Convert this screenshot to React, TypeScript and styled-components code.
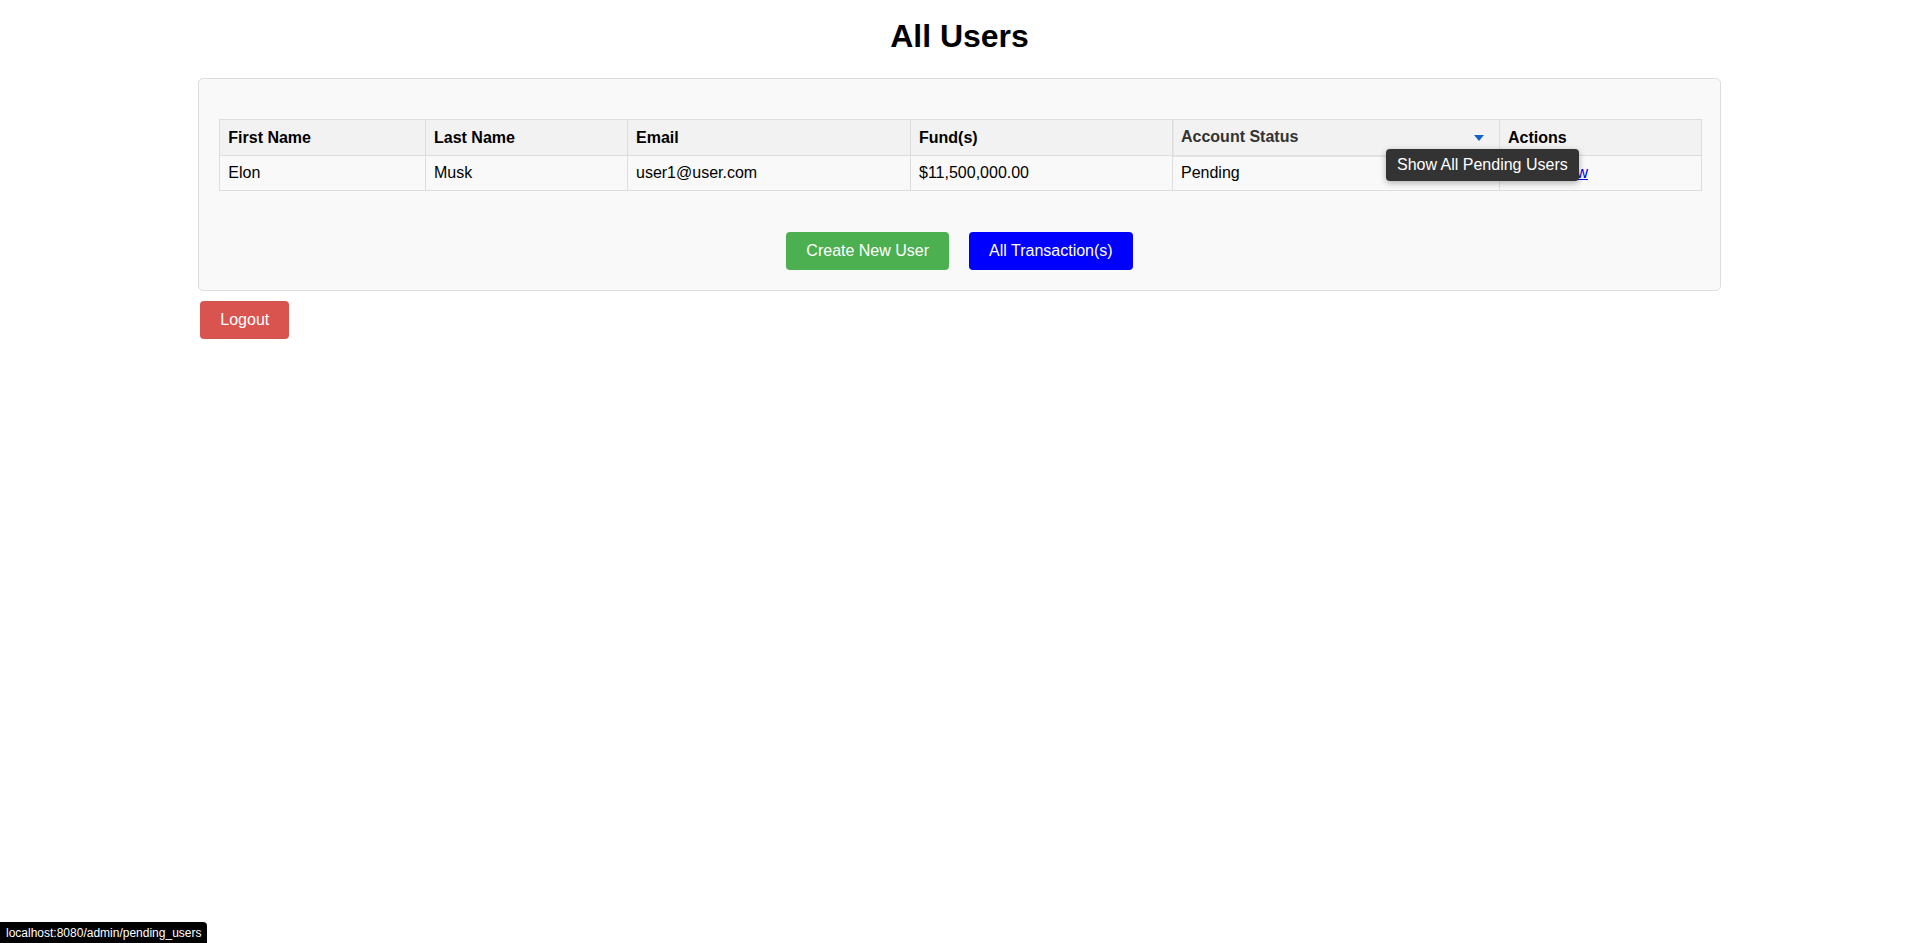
import React from "react";
import styled, { createGlobalStyle } from "styled-components";

const GlobalStyle = createGlobalStyle`
  html, body {
    margin: 0;
    padding: 0;
    background: #ffffff;
  }
  body {
    font-family: "Liberation Sans", Arial, sans-serif;
    color: #000;
  }
  * { box-sizing: border-box; }
`;

const Page = styled.div`
  padding: 18px 8px 0;
`;

const Title = styled.h1`
  margin: 0;
  font-size: 32px;
  line-height: 37px;
  font-weight: bold;
  text-align: center;
`;

const Card = styled.div`
  width: 80%;
  margin: 23px auto 0;
  padding: 20px;
  background: #f9f9f9;
  border: 1px solid #dddddd;
  border-radius: 5px;
`;

const Table = styled.table`
  width: 100%;
  margin: 20px 0 0;
  border-collapse: collapse;
  table-layout: fixed;
  font-size: 16px;
`;

const Th = styled.th`
  text-align: left;
  font-weight: bold;
  padding: 8px;
  line-height: 19px;
  background: #f2f2f2;
  border: 1px solid #dddddd;
  position: relative;
`;

const FilterTh = styled(Th)`
  padding: 0;
`;

const Dropdown = styled.div`
  position: relative;
  display: flex;
  align-items: center;
  justify-content: space-between;
  height: 35px;
  padding: 0 15px 2px 7px;
  color: #333333;
  background: #f2f2f2;
  border-left: 1px solid #e6e6e6;
  box-shadow: 0 2px 0 #e2e2e2;
  cursor: pointer;
`;

const Caret = styled.span`
  width: 0;
  height: 0;
  border-left: 5px solid transparent;
  border-right: 5px solid transparent;
  border-top: 6px solid #1565c0;
  margin-top: 3px;
`;

const Tooltip = styled.div`
  position: absolute;
  left: 212px;
  top: 29px;
  z-index: 5;
  padding: 7px 11px;
  background: #333333;
  color: #ffffff;
  font-weight: normal;
  font-size: 16px;
  line-height: 18px;
  white-space: nowrap;
  border-radius: 4px;
  box-shadow: 0 2px 6px rgba(0, 0, 0, 0.3);
`;

const Td = styled.td`
  padding: 8px;
  line-height: 18px;
  border: 1px solid #dddddd;
  background: #f9f9f9;
`;

const LinkRow = styled.div`
  display: flex;
  gap: 18px;
`;

const Link = styled.a`
  color: #0000ee;
  text-decoration: underline;
  cursor: pointer;
`;

const ButtonRow = styled.div`
  display: flex;
  justify-content: center;
  gap: 20px;
  margin-top: 41px;
`;

const Button = styled.button<{ $bg: string }>`
  font-family: "Liberation Sans", Arial, sans-serif;
  font-size: 16px;
  line-height: 18px;
  padding: 10px 20px;
  border: none;
  border-radius: 4px;
  color: #ffffff;
  background: ${(p) => p.$bg};
  cursor: pointer;
`;

const LogoutWrap = styled.div`
  width: 80%;
  margin: 10px auto 0;
  padding-left: 2px;
`;

const StatusBar = styled.div`
  position: fixed;
  left: 0;
  bottom: 0;
  height: 21px;
  padding: 0 6px;
  display: flex;
  align-items: center;
  background: #000000;
  color: #ffffff;
  font-family: "Liberation Sans", Arial, sans-serif;
  font-size: 12px;
  border-top-right-radius: 4px;
`;

const widths = [205.7, 202, 283, 262, 327, 202];

export default function App() {
  return (
    <>
      <GlobalStyle />
      <Page>
        <Title>All Users</Title>
        <Card>
          <Table>
            <colgroup>
              {widths.map((w, i) => (
                <col key={i} style={{ width: `${w}px` }} />
              ))}
            </colgroup>
            <thead>
              <tr>
                <Th>First Name</Th>
                <Th>Last Name</Th>
                <Th>Email</Th>
                <Th>Fund(s)</Th>
                <FilterTh>
                  <Dropdown>
                    <span>Account Status</span>
                    <Caret />
                    <Tooltip>Show All Pending Users</Tooltip>
                  </Dropdown>
                </FilterTh>
                <Th>Actions</Th>
              </tr>
            </thead>
            <tbody>
              <tr>
                <Td>Elon</Td>
                <Td>Musk</Td>
                <Td>user1@user.com</Td>
                <Td>$11,500,000.00</Td>
                <Td>Pending</Td>
                <Td>
                  <LinkRow>
                    <Link>Edit</Link>
                    <Link>View</Link>
                  </LinkRow>
                </Td>
              </tr>
            </tbody>
          </Table>
          <ButtonRow>
            <Button $bg="#4caf50">Create New User</Button>
            <Button $bg="#0000ff">All Transaction(s)</Button>
          </ButtonRow>
        </Card>
        <LogoutWrap>
          <Button $bg="#d9534f">Logout</Button>
        </LogoutWrap>
      </Page>
      <StatusBar>localhost:8080/admin/pending_users</StatusBar>
    </>
  );
}
